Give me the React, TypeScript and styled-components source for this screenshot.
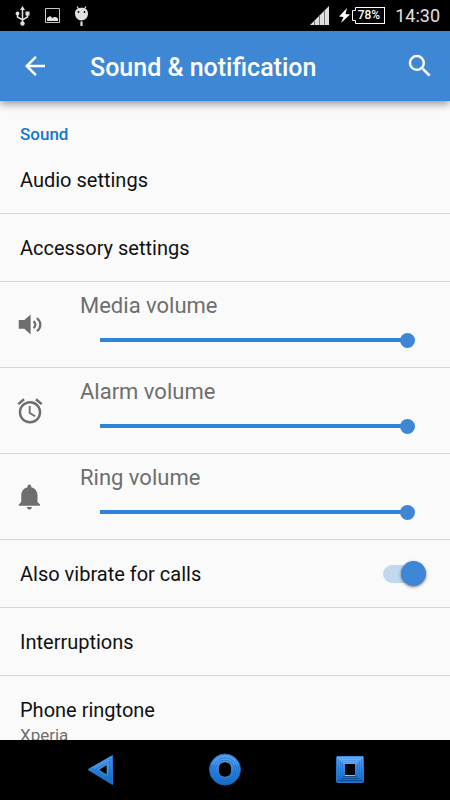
import React, { useState } from "react";
import styled, { createGlobalStyle } from "styled-components";

const blue = "#3d87d4";
const strongBlue = "#1377d3";
const trackBlue = "#2f83d8";
const grey = "#6e6e6e";

const GlobalStyle = createGlobalStyle`
  * { box-sizing: border-box; }
  body {
    margin: 0;
    background: #fafafa;
    color: #101010;
    font-family: Roboto, "Liberation Sans", sans-serif;
  }
`;

const Screen = styled.div`
  display: flex;
  flex-direction: column;
  height: 100vh;
  overflow: hidden;
`;

const StatusBar = styled.div`
  display: flex;
  align-items: center;
  justify-content: space-between;
  flex: none;
  height: 31px;
  padding: 0 10px 0 14px;
  background: #000;
  color: #e0e0e0;
`;

const StatusGroup = styled.div<{ $gap: number }>`
  display: flex;
  align-items: center;
  gap: ${(p) => p.$gap}px;
`;

const BatteryBox = styled.div`
  display: flex;
  align-items: center;
`;

const Battery = styled.span`
  display: flex;
  align-items: center;
  height: 17px;
  padding: 0 4px 0 2px;
  border: 1px solid #fff;
  border-left: 0;
  color: #fff;
  font-size: 12px;
  font-weight: 500;
  line-height: 15px;
`;

const Clock = styled.time`
  padding-top: 1px;
  font-size: 18px;
  line-height: 22px;
`;

const AppBar = styled.header`
  z-index: 1;
  display: flex;
  align-items: center;
  flex: none;
  height: 70px;
  padding: 0 15px 0 20px;
  border-bottom: 1px solid #2f86dc;
  background: ${blue};
  color: #fff;
  box-shadow: 0 3px 8px rgba(0, 0, 0, 0.4);
`;

const Title = styled.h1`
  flex: 1;
  margin: 0 0 0 40px;
  padding-top: 4px;
  font-size: 25px;
  font-weight: 500;
  line-height: 32px;
`;

const IconButton = styled.button`
  display: flex;
  align-items: center;
  justify-content: center;
  width: 30px;
  height: 30px;
  padding: 0;
  border: 0;
  background: none;
  color: inherit;
  cursor: pointer;
`;

const Content = styled.main`
  flex: 1;
  min-height: 0;
  overflow: hidden;
`;

const SectionTitle = styled.h2`
  height: 45px;
  margin: 0;
  padding: 22px 20px 0;
  color: ${strongBlue};
  font-size: 17px;
  font-weight: 500;
  line-height: 22px;
`;

const List = styled.ul`
  margin: 0;
  padding: 0;
  list-style: none;
`;

const Item = styled.li`
  border-bottom: 1px solid #dadada;
`;

const SettingButton = styled.button`
  display: flex;
  flex-direction: column;
  justify-content: center;
  width: 100%;
  min-height: 67px;
  padding: 20px 20px 19px;
  border: 0;
  background: none;
  color: inherit;
  font-family: inherit;
  font-size: 20px;
  line-height: 28px;
  text-align: left;
  cursor: pointer;
`;

const Summary = styled.span`
  color: ${grey};
  font-size: 17px;
  line-height: 22px;
`;

const SwitchRow = styled.label`
  display: flex;
  align-items: center;
  justify-content: space-between;
  height: 67px;
  padding: 0 24px 0 20px;
  font-size: 20px;
  line-height: 28px;
`;

const Switch = styled.input`
  appearance: none;
  display: flex;
  align-items: center;
  width: 43px;
  height: 18px;
  margin: 0;
  border-radius: 9px;
  background: ${(p) => (p.checked ? "#c1d8ef" : "#c4c4c4")};
  cursor: pointer;

  &::before {
    content: "";
    flex: none;
    width: 25px;
    height: 25px;
    margin-left: ${(p) => (p.checked ? "18px" : "0")};
    border-radius: 50%;
    background: ${(p) => (p.checked ? blue : "#f1f1f1")};
    box-shadow: 0 1px 3px rgba(0, 0, 0, 0.5);
  }
`;

const VolumeRow = styled.div`
  display: grid;
  grid-template-columns: 60px 1fr;
  align-items: center;
  height: 85px;
  padding: 0 35px 0 20px;
`;

const VolumeIcon = styled.svg`
  width: 30px;
  height: 30px;
  margin-left: -5px;
`;

const VolumeControl = styled.div`
  display: flex;
  flex-direction: column;
  padding-bottom: 2px;
`;

const VolumeLabel = styled.label`
  color: ${grey};
  font-size: 22px;
  line-height: 32px;
`;

const Slider = styled.input`
  appearance: none;
  height: 36px;
  margin: 0 0 0 20px;
  background: none;
  cursor: pointer;

  &::-webkit-slider-runnable-track {
    height: 4px;
    background: linear-gradient(${trackBlue}, ${trackBlue}) 0 0 / calc(var(--level) - 4px) 100% no-repeat;
  }

  &::-webkit-slider-thumb {
    appearance: none;
    width: 15px;
    height: 15px;
    margin-top: -5px;
    border-radius: 50%;
    background: ${blue};
  }
`;

const NavBar = styled.nav`
  display: grid;
  grid-template-columns: repeat(3, 125px);
  justify-content: center;
  justify-items: center;
  align-items: center;
  flex: none;
  height: 60px;
  background: #000;
`;

const NavButton = styled(IconButton)`
  width: 34px;
  height: 34px;
`;

const UsbIcon = () => (
  <svg width="17" height="20" viewBox="0 0 17 20" fill="none" stroke="#e0e0e0" strokeWidth="1.5" aria-hidden="true">
    <path d="M8.500 3v14M3.500 7v4l5 3 5-3V7" />
    <path d="M8.500 0l2.500 4h-5z" fill="#e0e0e0" stroke="none" />
    <circle cx="8.500" cy="17.500" r="2.200" fill="#e0e0e0" stroke="none" />
    <circle cx="3.500" cy="7.500" r="1.900" fill="#e0e0e0" stroke="none" />
    <path d="M11.500 5.500h4v4h-4z" fill="#e0e0e0" stroke="none" />
  </svg>
);

const PictureIcon = () => (
  <svg width="15" height="15" viewBox="0 0 15 15" aria-hidden="true">
    <path d="M.5.5h14v14H.5z" fill="none" stroke="#c8c8c8" />
    <path d="M2 13V10l3-2 2.500 2L9 9h2l2 1.500V13z" fill="#e0e0e0" />
  </svg>
);

const DroidIcon = () => (
  <svg width="15" height="20" viewBox="0 0 15 20" aria-hidden="true">
    <path d="M3 .5l2 3M12 .5l-2 3" stroke="#e0e0e0" strokeWidth="1.300" />
    <path d="M7.500 1.800C11.500 1.800 14 4 14 7.500c0 4-3 7-6.500 7S1 11.500 1 7.500c0-3.500 2.500-5.700 6.500-5.700z" fill="#e0e0e0" />
    <path d="M7.500 15.500V20" stroke="#e0e0e0" strokeWidth="2.200" />
    <circle cx="4.500" cy="6" r="0.900" fill="#000" />
    <circle cx="10.500" cy="6" r="0.900" fill="#000" />
  </svg>
);

const SignalIcon = () => (
  <svg width="19" height="19" viewBox="0 0 19 19" aria-hidden="true">
    <path d="M0 19L19 0v19z" fill="#dedede" />
    <path d="M4.500 14v5M9.500 9v10M14.500 4v15" stroke="#777" />
  </svg>
);

const BoltIcon = () => (
  <svg width="11" height="15" viewBox="0 0 11 15" aria-hidden="true">
    <path d="M8 0L0 8.500l4.500.5L2 15l9-8.500L6.500 6z" fill="#fff" />
  </svg>
);

const BatteryCap = () => (
  <svg width="4" height="17" viewBox="0 0 4 17" fill="none" stroke="#fff" aria-hidden="true">
    <path d="M4 .5h-.5v3h-3v10h3v3H4" />
  </svg>
);

const BackArrow = () => (
  <svg width="30" height="30" viewBox="0 0 24 24" fill="currentColor" aria-hidden="true">
    <path d="M20 11H7.830l5.590-5.590L12 4l-8 8 8 8 1.410-1.410L7.830 13H20v-2z" />
  </svg>
);

const SearchIcon = () => (
  <svg width="30" height="30" viewBox="0 0 24 24" fill="currentColor" aria-hidden="true">
    <path d="M15.500 14h-.79l-.28-.27A6.471 6.471 0 0 0 16 9.500 6.500 6.500 0 1 0 9.500 16c1.610 0 3.090-.59 4.230-1.570l.27.28v.79l5 4.990L20.490 19l-4.990-5zm-6 0C7.010 14 5 11.990 5 9.500S7.010 5 9.500 5 14 7.010 14 9.500 11.990 14 9.500 14z" />
  </svg>
);

const volumePaths = {
  alarm:
    "M22 5.720l-4.600-3.860-1.290 1.530 4.600 3.860L22 5.720zM7.880 3.390L6.600 1.860 2 5.710l1.290 1.530 4.590-3.850zM12.500 8H11v6l4.750 2.850.75-1.230-4-2.370V8zM12 4c-4.970 0-9 4.030-9 9s4.020 9 9 9a9 9 0 0 0 0-18zm0 16c-3.870 0-7-3.130-7-7s3.130-7 7-7 7 3.130 7 7-3.130 7-7 7z",
  ring: "M11.500 22c1.100 0 2-.9 2-2h-4c0 1.100.9 2 2 2zm6.500-6v-5.500c0-3.070-2.130-5.640-5-6.320V3.500c0-.83-.67-1.500-1.500-1.500S10 2.670 10 3.500v.68c-2.870.68-5 3.250-5 6.320V16l-2 2v1h17v-1l-2-2z",
};

type VolumeKind = "media" | keyof typeof volumePaths;

const Glyph = ({ kind }: { kind: VolumeKind }) => (
  <VolumeIcon viewBox="0 0 24 24" fill={grey} aria-hidden="true">
    {kind === "media" ? (
      <>
        <path d="M3 8v7h4.500l5 4.500V3.500L7.500 8z" />
        <path d="M14.800 9c2 1.500 2 4 0 5.500M17.500 6.500c3.700 3 3.700 7.500 0 10.500" fill="none" stroke={grey} strokeWidth="1.800" />
      </>
    ) : (
      <path d={volumePaths[kind]} />
    )}
  </VolumeIcon>
);

const NavGradients = () => (
  <defs>
    <linearGradient id="navBlue" x1="0" y1="0" x2="0" y2="1">
      <stop offset="0" stopColor="#63a5f0" />
      <stop offset="0.5" stopColor="#2a86e6" />
      <stop offset="1" stopColor="#1768c2" />
    </linearGradient>
  </defs>
);

const NavBack = () => (
  <svg width="34" height="34" viewBox="0 0 34 34" aria-hidden="true">
    <NavGradients />
    <path d="M5 16.500L29.500 2.500v29z" fill="url(#navBlue)" stroke="#2476cc" strokeWidth="1" strokeLinejoin="round" />
    <path d="M8.500 16.500L28 5v24zM12 16.500L26.500 8v18z" fill="none" stroke="#1a6cc4" strokeWidth="0.700" />
    <path d="M8 15.500L28 4M11 15.500L26 7" stroke="#65adf5" strokeWidth="0.700" />
    <path d="M15.500 17L24 11.500v10.500z" fill="#000" stroke="#8bbdf2" strokeWidth="0.500" />
  </svg>
);

const NavHome = () => (
  <svg width="34" height="34" viewBox="0 0 34 34" fill="none" aria-hidden="true">
    <circle cx="17" cy="16.500" r="15.500" fill="url(#navBlue)" stroke="#1765b8" />
    <g stroke="#1a6cc4" strokeWidth="0.700">
      <circle cx="17" cy="16.500" r="13.500" />
      <circle cx="17" cy="16.500" r="11.500" />
      <circle cx="17" cy="16.500" r="9.500" />
    </g>
    <path d="M5 12a12.500 12.500 0 0 1 24 0M7.500 12a10.500 10.500 0 0 1 19 0" stroke="#65adf5" strokeWidth="0.700" />
    <rect x="10.500" y="9" width="13" height="15" rx="6" fill="#000" stroke="#74aeec" strokeWidth="0.500" />
  </svg>
);

const NavRecent = () => (
  <svg width="34" height="34" viewBox="0 0 34 34" fill="none" aria-hidden="true">
    <rect x="3.500" y="3.500" width="27" height="26" rx="1" fill="url(#navBlue)" stroke="#2476cc" />
    <path d="M4 4h26M6 6.500h22M8 8.500h18M10 10.500h14" stroke="#77b5f5" strokeWidth="0.700" />
    <path d="M5.500 6v22M7.500 8v18M9.500 10v14M28.500 6v22M26.500 8v18M24.500 10v14" stroke="#1a6cc4" strokeWidth="0.500" />
    <path d="M5 27.500h24M8 25.500h18M10 23.500h14" stroke="#073f7d" strokeWidth="0.700" />
    <rect x="12" y="11" width="10" height="11" fill="#000" />
    <path d="M12 22.500h10" stroke="#8bbdf2" />
  </svg>
);

const VolumeSetting = ({ kind, label }: { kind: VolumeKind; label: string }) => {
  const [value, setValue] = useState(100);
  return (
    <Item>
      <VolumeRow>
        <Glyph kind={kind} />
        <VolumeControl>
          <VolumeLabel htmlFor={kind}>{label}</VolumeLabel>
          <Slider
            id={kind}
            type="range"
            min={0}
            max={100}
            value={value}
            onChange={(e) => setValue(Number(e.target.value))}
            style={{ "--level": `${value}%` } as React.CSSProperties}
          />
        </VolumeControl>
      </VolumeRow>
    </Item>
  );
};

const Setting = ({ label, summary }: { label: string; summary?: string }) => (
  <Item>
    <SettingButton type="button">
      <span>{label}</span>
      {summary && <Summary>{summary}</Summary>}
    </SettingButton>
  </Item>
);

export default function App() {
  const [vibrate, setVibrate] = useState(true);
  return (
    <Screen>
      <GlobalStyle />
      <StatusBar>
        <StatusGroup $gap={14}>
          <UsbIcon />
          <PictureIcon />
          <DroidIcon />
        </StatusGroup>
        <StatusGroup $gap={10}>
          <SignalIcon />
          <StatusGroup $gap={2}>
            <BoltIcon />
            <BatteryBox>
              <BatteryCap />
              <Battery>78%</Battery>
            </BatteryBox>
          </StatusGroup>
          <Clock>14:30</Clock>
        </StatusGroup>
      </StatusBar>
      <AppBar>
        <IconButton type="button" aria-label="Back">
          <BackArrow />
        </IconButton>
        <Title>Sound &amp; notification</Title>
        <IconButton type="button" aria-label="Search">
          <SearchIcon />
        </IconButton>
      </AppBar>
      <Content>
        <SectionTitle>Sound</SectionTitle>
        <List>
          <Setting label="Audio settings" />
          <Setting label="Accessory settings" />
          <VolumeSetting kind="media" label="Media volume" />
          <VolumeSetting kind="alarm" label="Alarm volume" />
          <VolumeSetting kind="ring" label="Ring volume" />
          <Item>
            <SwitchRow>
              Also vibrate for calls
              <Switch
                type="checkbox"
                role="switch"
                checked={vibrate}
                onChange={(e) => setVibrate(e.target.checked)}
              />
            </SwitchRow>
          </Item>
          <Setting label="Interruptions" />
          <Setting label="Phone ringtone" summary="Xperia" />
        </List>
      </Content>
      <NavBar>
        <NavButton type="button" aria-label="Back">
          <NavBack />
        </NavButton>
        <NavButton type="button" aria-label="Home">
          <NavHome />
        </NavButton>
        <NavButton type="button" aria-label="Recent apps">
          <NavRecent />
        </NavButton>
      </NavBar>
    </Screen>
  );
}
